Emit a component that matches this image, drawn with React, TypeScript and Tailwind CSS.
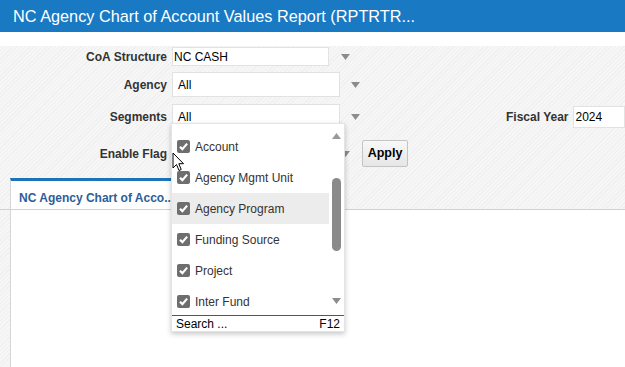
import React from 'react';

const hatch =
  'bg-[repeating-linear-gradient(135deg,#f0f0f0_0px,#f0f0f0_1px,#f6f6f6_1px,#f6f6f6_3px)]';

const DownArrow: React.FC<{ className?: string }> = ({ className }) => (
  <svg width="9" height="6" viewBox="0 0 9 6" className={className}>
    <polygon points="0,0 9,0 4.5,6" fill="#8c8c8c" />
  </svg>
);

const Check: React.FC = () => (
  <span className="w-[13px] h-[13px] rounded-[2px] bg-[#6e6e6e] flex items-center justify-center shrink-0">
    <svg width="11" height="11" viewBox="0 0 10 10">
      <polyline points="1.8,5.2 4,7.4 8.3,2.4" fill="none" stroke="#fff" strokeWidth="2" />
    </svg>
  </span>
);

const segments = ['Account', 'Agency Mgmt Unit', 'Agency Program', 'Funding Source', 'Project', 'Inter Fund'];

export default function App() {
  return (
    <div className="w-[625px] h-[367px] overflow-hidden relative bg-white font-['Liberation_Sans',Arial,sans-serif] text-[12px]">
      {/* Title bar */}
      <div className="h-8 bg-[#1979c3] flex items-center pl-[13px] text-white text-[16.3px]">
        NC Agency Chart of Account Values Report (RPTRTR...
      </div>
      <div className="h-[14px] bg-white" />

      {/* Prompts */}
      <div className={`${hatch} pt-px flex flex-col`}>
        <div className="flex items-center h-[19px]">
          <label className="w-[167px] text-right font-bold text-[#333]">CoA Structure</label>
          <div className="ml-[5px] w-[157px] h-[19px] bg-white border border-[#e2e2e2] flex items-center pl-px text-black">
            NC CASH
          </div>
          <div className="w-[32px] flex justify-center"><DownArrow /></div>
        </div>

        <div className="flex items-center h-[25px] mt-[6px]">
          <label className="w-[167px] text-right font-bold text-[#333]">Agency</label>
          <div className="ml-[5px] w-[168px] h-[25px] bg-white border border-[#e2e2e2] flex items-center pl-[5px] text-black">
            All
          </div>
          <div className="w-[30px] flex justify-center"><DownArrow /></div>
        </div>

        <div className="flex items-center h-[25px] mt-[7px]">
          <label className="w-[167px] text-right font-bold text-[#333]">Segments</label>
          <div className="ml-[5px] w-[168px] h-[25px] bg-white border border-[#e2e2e2] flex items-center pl-[5px] text-black">
            All
          </div>
          <div className="w-[30px] flex justify-center"><DownArrow /></div>
          <label className="ml-[136px] font-bold text-[#333]">Fiscal Year</label>
          <div className="ml-[4px] flex-1 h-[22px] bg-white border border-[#e2e2e2] flex items-center pl-[2px] text-black">
            2024
          </div>
        </div>

        <div className="flex items-center h-[27px] mt-[11px]">
          <label className="w-[167px] text-right font-bold text-[#333]">Enable Flag</label>
          <div className="ml-[5px] w-[157px] h-[25px] bg-white border border-[#e2e2e2]" />
          <div className="w-[32px] flex justify-center"><DownArrow /></div>
          <button className="ml-px w-[46px] h-[27px] rounded-[2px] border border-[#c4c4c4] bg-[linear-gradient(#f8f8f8,#e6e6e6)] font-bold text-black text-[12.5px]">
            Apply
          </button>
        </div>

        {/* Tab strip */}
        <div className="flex mt-[11px] h-[32px] pl-[10px] border-b border-[#d2d2d2]">
          <div className="w-[180px] bg-white border-t-[3px] border-t-[#1e73b8] border-l border-l-[#d6d6d6] pl-[8px] pt-[8px] font-bold text-[#2d5e98] text-[12px] whitespace-nowrap">
            NC Agency Chart of Acco...
          </div>
        </div>
      </div>

      {/* Report body */}
      <div className={`${hatch} pl-[10px] h-[200px]`}>
        <div className="h-full bg-white border-l border-[#d6d6d6]" />
      </div>

      {/* Segments dropdown */}
      <div className="absolute left-[171px] top-[123px] w-[174px] h-[209px] bg-white border border-[#e4e4e4] shadow-[0_2px_5px_rgba(0,0,0,0.22)] flex flex-col">
        <div className="flex h-[191px]">
          <div className="flex-1 overflow-hidden pt-[7px]">
            {segments.map((s) => (
              <div
                key={s}
                className={`h-[31px] flex items-center pl-[5px] gap-[5px] text-[#333] ${
                  s === 'Agency Program' ? 'bg-[#ececec]' : ''
                }`}
              >
                <Check />
                <span>{s}</span>
              </div>
            ))}
          </div>
          <div className="w-[15px] flex flex-col items-center pt-[9px]">
            <svg width="9" height="6" viewBox="0 0 9 6">
              <polygon points="0,6 9,6 4.5,0" fill="#9a9a9a" />
            </svg>
            <div className="mt-[39px] w-[9px] h-[73px] rounded-full bg-[#8a8a8a]" />
            <div className="mt-[47px]"><DownArrow /></div>
          </div>
        </div>
        <div className="border-t-[1.5px] border-[#555] flex justify-between items-center h-[17px] px-[4px] text-black">
          <span>Search ...</span>
          <span>F12</span>
        </div>
      </div>

      {/* Mouse pointer */}
      <svg className="absolute left-[172px] top-[152px]" width="14" height="21" viewBox="0 0 14 21">
        <path d="M1 1 L1 16 L4.5 12.5 L7 18.5 L9.2 17.5 L6.8 11.7 L11.5 11.7 Z" fill="#fff" stroke="#000" strokeWidth="1" strokeLinejoin="round" />
      </svg>
    </div>
  );
}
